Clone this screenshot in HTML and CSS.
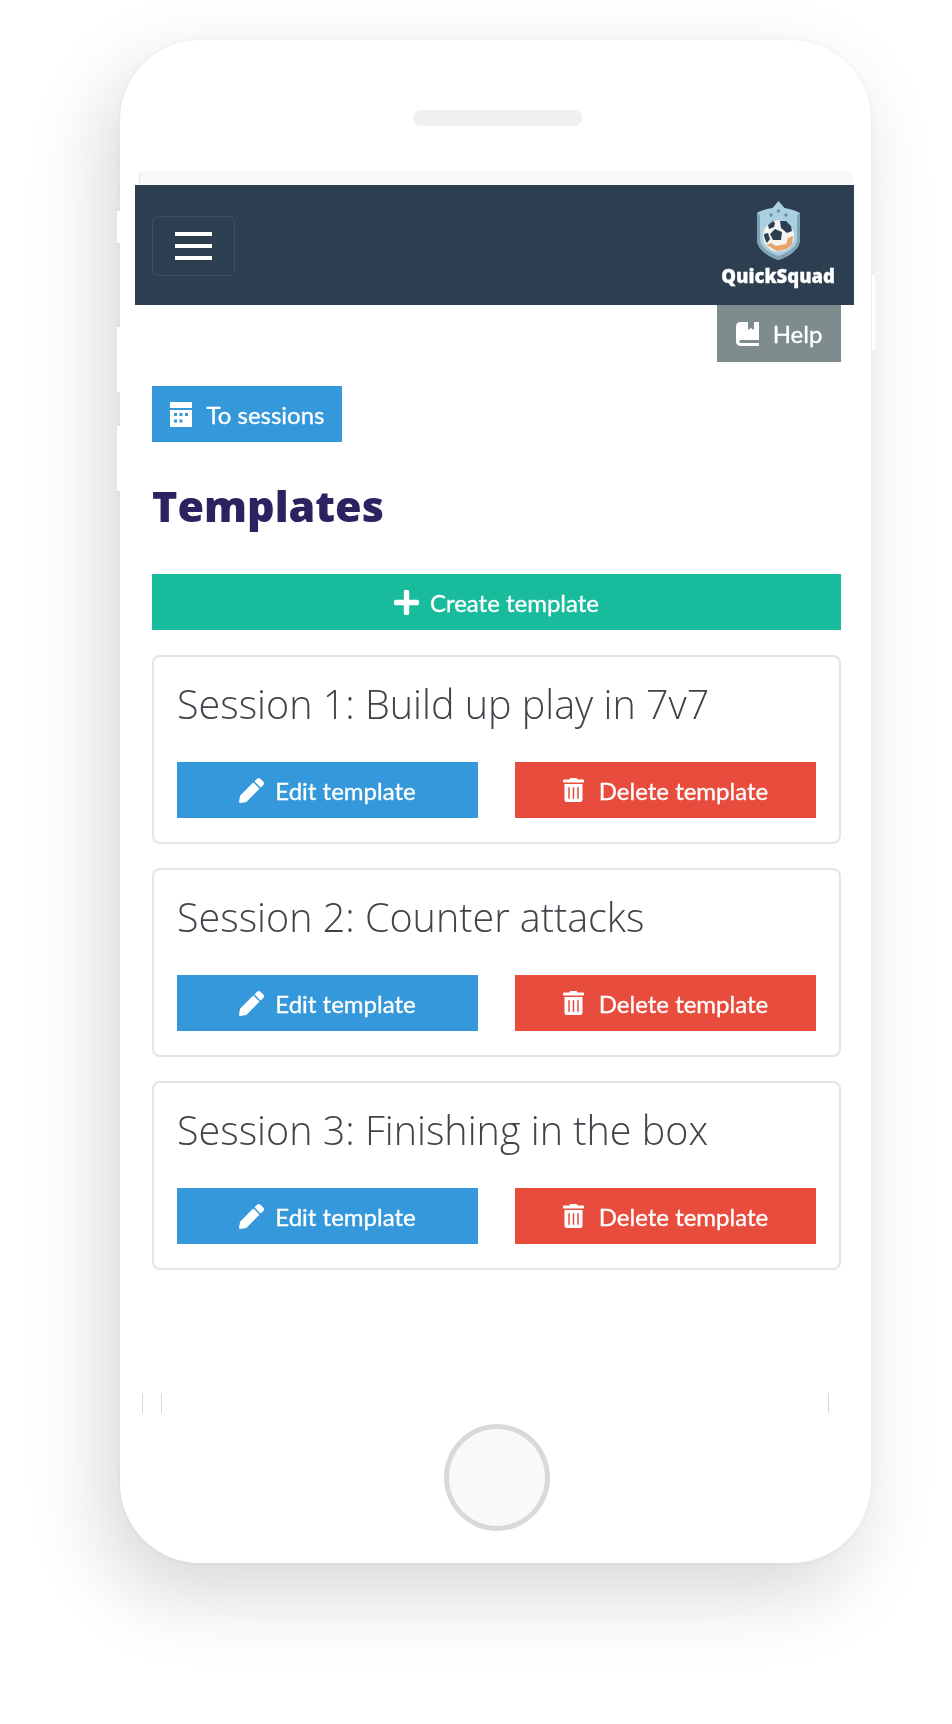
FILE: index.html
```html
<!DOCTYPE html>
<html lang="en">
<head>
    <meta charset="UTF-8">
    <meta name="viewport" content="width=device-width, initial-scale=1.0">
    <title>QuickSquad - Templates</title>
    <link rel="stylesheet" href="styles.css">
</head>
<body>
    <svg class="icon-defs" width="0" height="0">
        <symbol id="i-edit" viewBox="0 0 512 512"><path fill="#fff" d="M497.900 142.100l-46.100 46.100c-4.700 4.700-12.300 4.700-17 0l-111-111c-4.700-4.700-4.700-12.300 0-17l46.100-46.100c18.700-18.700 49.100-18.700 67.900 0l60.100 60.100c18.800 18.700 18.800 49.100 0 67.900zM284.200 99.800L21.600 362.400.4 483.900c-2.900 16.400 11.400 30.600 27.800 27.800l121.500-21.300 262.600-262.600c4.700-4.700 4.700-12.300 0-17l-111-111c-4.800-4.700-12.400-4.700-17.100 0z"/></symbol>
        <symbol id="i-trash" viewBox="0 0 448 512"><path fill="#fff" d="M32 464a48 48 0 0 0 48 48h288a48 48 0 0 0 48-48V128H32zm272-256a16 16 0 0 1 32 0v224a16 16 0 0 1-32 0zm-96 0a16 16 0 0 1 32 0v224a16 16 0 0 1-32 0zm-96 0a16 16 0 0 1 32 0v224a16 16 0 0 1-32 0zM432 32H312l-9.400-18.700A24 24 0 0 0 281.100 0H166.800a23.720 23.720 0 0 0-21.400 13.300L136 32H16A16 16 0 0 0 0 48v32a16 16 0 0 0 16 16h416a16 16 0 0 0 16-16V48a16 16 0 0 0-16-16z"/></symbol>
    </svg>

    <div class="phone">
        <!-- white slivers on the phone's edge -->
        <span class="tick tick-a"></span>
        <span class="tick tick-b"></span>
        <span class="tick tick-c"></span>
        <span class="tick tick-d"></span>
        <span class="seam seam-a"></span>
        <span class="seam seam-b"></span>
        <span class="seam seam-c"></span>

        <div class="speaker"></div>
        <div class="screen-top"></div>

        <nav class="navbar">
            <button class="toggler" type="button">
                <span></span><span></span><span></span>
            </button>
            <div class="brand">
                <svg class="crest" width="43" height="59" viewBox="0 0 43 59">
                    <path fill="#a9cfe0" d="M21.500 0l6 7c5 1 10 2 15.500 5v26c0 10-10 17-21.500 21C10 55 0 48 0 38V12c5-3 10-4 15.500-5z"/>
                    <path fill="#7fa3b3" d="M21.500 55C11 51 3 46 3 38V14L0 12v26c0 10 10 17 21.500 21C33 55 43 48 43 38V12l-3 2v24c0 8-8 13-18.500 17z"/>
                    <circle cx="21.500" cy="35" r="15.500" fill="#f6f4f0"/>
                    <path fill="#e9a26a" d="M9 44c4 1 7 5 12 6 6 0 11-3 14-7l1-8-5 2-2 6-10 2-5-3z"/>
                    <path fill="#2c3e50" d="M18 28l7 3-1 8h-8l-3-6zM23 20h6l5 5 1 5-5 2-6-5zM7 33l4-1 2 6-3 4c-2-3-3-6-3-9zM11 24l5-4 2 2-1 4-5 2z"/>
                    <circle cx="14" cy="14" r="1.700" fill="#6f8fa0"/>
                    <circle cx="21.500" cy="10" r="1.700" fill="#6f8fa0"/>
                    <circle cx="29" cy="14" r="1.700" fill="#6f8fa0"/>
                </svg>
                <span class="brand-name">QuickSquad</span>
            </div>
        </nav>

        <main class="content">
            <div class="help-row">
                <a class="btn btn-help" href="#">
                    <svg width="23" height="24" viewBox="0 0 23 24"><path fill="#fff" d="M4 0h8v8l3-2 3 2V0h5v18H5c-2.500 0-2.500 3 0 3h18v3H5c-3 0-5-2-5-4V4c0-2 2-4 4-4z"/></svg>
                    Help
                </a>
            </div>

            <a class="btn btn-blue btn-sessions" href="#">
                <svg width="22" height="25" viewBox="0 0 22 25"><path fill="#fff" d="M0 0h22v6H0zM0 8h22v17H0z"/><g fill="#3498db"><rect x="4" y="11" width="3" height="3"/><rect x="9.500" y="11" width="3" height="3"/><rect x="15" y="11" width="3" height="3"/><rect x="4" y="17.500" width="3" height="3"/><rect x="9.500" y="17.500" width="3" height="3"/></g></svg>
                To sessions
            </a>

            <h1 class="page-title">Templates</h1>

            <a class="btn btn-green btn-icon-wide btn-create" href="#">
                <svg width="25" height="25" viewBox="0 0 448 448"><path fill="#fff" d="M416 176H272V32c0-17.670-14.330-32-32-32h-32c-17.670 0-32 14.330-32 32v144H32c-17.670 0-32 14.330-32 32v32c0 17.670 14.330 32 32 32h144v144c0 17.670 14.330 32 32 32h32c17.670 0 32-14.330 32-32V272h144c17.670 0 32-14.330 32-32v-32c0-17.670-14.330-32-32-32z"/></svg>
                Create template
            </a>

            <section class="card">
                <h2 class="card-title">Session 1: Build up play in 7v7</h2>
                <div class="card-actions">
                    <a class="btn btn-blue btn-icon-wide" href="#"><svg width="25" height="25"><use href="#i-edit"/></svg> Edit template</a>
                    <a class="btn btn-red" href="#"><svg width="21" height="24"><use href="#i-trash"/></svg> Delete template</a>
                </div>
            </section>

            <section class="card">
                <h2 class="card-title">Session 2: Counter attacks</h2>
                <div class="card-actions">
                    <a class="btn btn-blue btn-icon-wide" href="#"><svg width="25" height="25"><use href="#i-edit"/></svg> Edit template</a>
                    <a class="btn btn-red" href="#"><svg width="21" height="24"><use href="#i-trash"/></svg> Delete template</a>
                </div>
            </section>

            <section class="card">
                <h2 class="card-title">Session 3: Finishing in the box</h2>
                <div class="card-actions">
                    <a class="btn btn-blue btn-icon-wide" href="#"><svg width="25" height="25"><use href="#i-edit"/></svg> Edit template</a>
                    <a class="btn btn-red" href="#"><svg width="21" height="24"><use href="#i-trash"/></svg> Delete template</a>
                </div>
            </section>
        </main>

        <div class="home-button"></div>
    </div>
</body>
</html>
```
FILE: styles.css
```css
html, body {
    margin: 0;
    height: 1724px;
    overflow: hidden;
    background: #fff;
}
body {
    padding: 40px 81px 0 120px;
    box-sizing: border-box;
    font-family: "Lato", sans-serif;
}
.icon-defs {
    display: block;
}
.phone {
    position: relative;
    display: flex;
    flex-direction: column;
    height: 1523px;
    background: #fff;
    border-radius: 80px;
    box-shadow: -15px 30px 80px rgba(0, 0, 0, 0.16), 0 0 5px rgba(0, 0, 0, 0.05);
    padding-top: 70px;
    box-sizing: border-box;
}
.tick {
    position: absolute;
    width: 3px;
    background: #fff;
}
.tick-a { left: -3px; top: 171px; height: 32px; }
.tick-b { left: -3px; top: 287px; height: 65px; }
.tick-c { left: -3px; top: 386px; height: 65px; }
.tick-d { right: -4px; top: 235px; height: 75px; }
.seam {
    position: absolute;
    top: 1353px;
    width: 1px;
    height: 20px;
    background: #d8d8d8;
}
.seam-a { left: 22px; }
.seam-b { left: 41px; }
.seam-c { left: 708px; }
.speaker {
    width: 169px;
    height: 16px;
    margin-left: 293px;
    background: #f0f0f0;
    border-radius: 8px;
}
.screen-top {
    width: 714px;
    height: 14px;
    margin: 45px 0 0 19px;
    background: #f8f8fa;
    border-left: 1px solid #e6e6ea;
    border-radius: 4px 4px 0 0;
    box-sizing: border-box;
}
.navbar {
    display: flex;
    justify-content: space-between;
    align-items: flex-start;
    width: 719px;
    height: 120px;
    margin-left: 15px;
    padding: 16px 19px 0 17px;
    box-sizing: border-box;
    background: #2c3e50;
    filter: blur(0.4px);
}
.toggler {
    display: flex;
    flex-direction: column;
    align-items: center;
    justify-content: center;
    gap: 8px;
    width: 83px;
    height: 60px;
    margin-top: 15px;
    padding: 0;
    background: transparent;
    border: 1px solid #3d4e60;
    border-radius: 6px;
}
.toggler span {
    width: 37px;
    height: 4px;
    background: #fff;
}
.brand {
    display: flex;
    flex-direction: column;
    align-items: center;
}
.brand-name {
    margin-top: 5px;
    font-family: "Open Sans", sans-serif;
    font-weight: 800;
    font-size: 18.5px;
    line-height: 22px;
    color: #fff;
    -webkit-text-stroke: 0.3px #fff;
}
.content {
    padding: 0 13px 0 17px;
    margin-left: 15px;
    width: 719px;
    box-sizing: border-box;
    filter: blur(0.4px);
}
.help-row {
    display: flex;
    justify-content: flex-end;
}
.btn {
    display: flex;
    align-items: center;
    justify-content: center;
    gap: 15px;
    height: 56px;
    color: #fff;
    font-size: 24px;
    text-decoration: none;
    box-sizing: border-box;
    -webkit-text-stroke: 0.3px #fff;
}
.btn-help {
    width: 124px;
    height: 57px;
    background: #7f8c8d;
    gap: 14px;
}
.btn-sessions {
    width: 190px;
    margin-top: 24px;
}
.btn-blue { background: #3498db; }
.btn-red { background: #e74c3c; }
.btn-green { background: #18bc9c; }
.btn-icon-wide { gap: 11px; }
.btn-create { margin-bottom: 25px; }
.page-title {
    margin: 33px 0 38px;
    font-family: "Open Sans", sans-serif;
    font-weight: 800;
    font-size: 43px;
    line-height: 61px;
    color: #2a2360;
}
.card {
    height: 189px;
    margin-top: 24px;
    padding: 22px 23px 0;
    background: #fff;
    border: 2px solid #e4e4e4;
    border-radius: 8px;
    box-sizing: border-box;
}
.card-title {
    margin: 0;
    font-family: "Open Sans", sans-serif;
    font-weight: 300;
    font-size: 39.5px;
    line-height: 50px;
    color: #3f444a;
}
.card-actions {
    display: grid;
    grid-template-columns: 301px 301px;
    gap: 37px;
    margin-top: 33px;
}
.home-button {
    flex-shrink: 0;
    width: 106px;
    height: 107px;
    margin: auto 0 32px 324px;
    background: #f9f9f9;
    border: 5px solid #d9d9d9;
    border-radius: 50%;
    box-sizing: border-box;
}
```
